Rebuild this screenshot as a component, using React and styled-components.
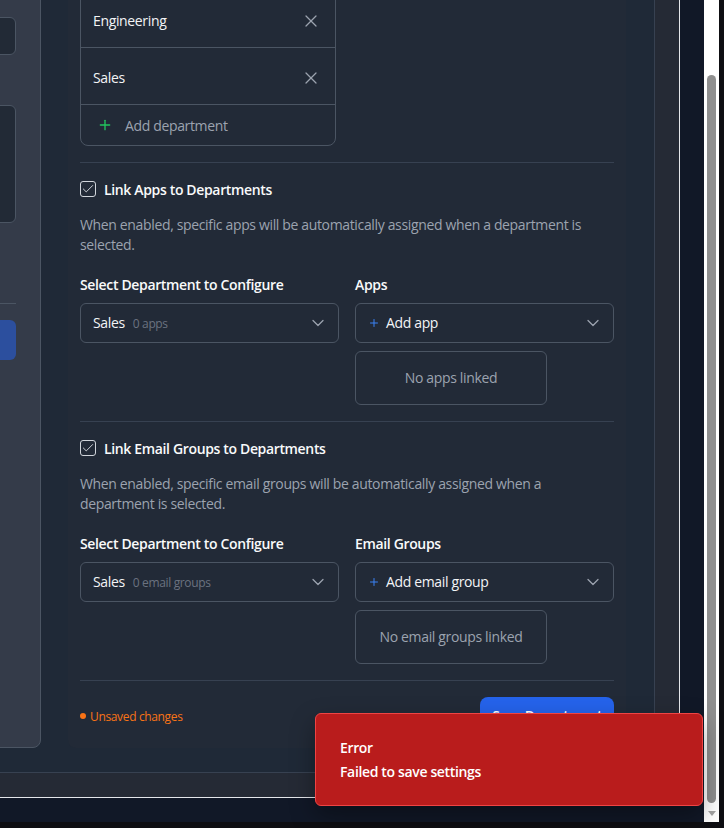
import React, { useLayoutEffect, useRef } from "react";
import styled, { createGlobalStyle } from "styled-components";
import { ChevronDown, Plus, X, Check } from "lucide-react";

const GlobalStyle = createGlobalStyle`
  * { box-sizing: border-box; }
  html, body { margin: 0; padding: 0; background: #0e0e12; overflow: hidden; }
  body {
    font-family: "Open Sans", "Noto Sans", sans-serif;
    font-size: 14px;
    color: #f3f4f6;
    letter-spacing: -0.025em;
  }
`;

const Window = styled.div`
  position: relative;
  width: 724px;
  height: 828px;
  display: flex;
  align-items: flex-start;
  background: #0e0e12;
  overflow: hidden;
`;

const Viewport = styled.div`
  width: 704px;
  height: 822px;
  overflow: hidden;
  background: #111827;
  flex-shrink: 0;
`;

const ScrollContent = styled.div`
  width: max-content;
  padding: 24px 24px 40px 24px;
`;

const OuterBox = styled.div`
  background: #252a35;
  border: 1px solid #e5e7eb;
  padding: 24px;
`;

const Panel = styled.div`
  display: flex;
  align-items: stretch;
  gap: 27px;
  background: #1f2937;
  border: 1px solid #374151;
  padding: 24px 28px 24px 24px;
`;

const Sidebar = styled.aside`
  width: 260px;
  background: #343b49;
  border: 1px solid #4b5563;
  border-radius: 8px;
  padding: 66px 24px 24px;
  display: flex;
  flex-direction: column;
  gap: 50px;
`;

const SideInput = styled.div`
  height: ${(p) => p.$h}px;
  background: #222a36;
  border: 1px solid #4b5563;
  border-radius: 6px;
`;

const SideActions = styled.div`
  margin-top: 30px;
  padding-top: 16px;
  border-top: 1px solid #4b5563;
`;

const SideButton = styled.div`
  height: 40px;
  border-radius: 6px;
  background: #2c4f9e;
`;

const Card = styled.section`
  width: 558px;
  background: #222a37;
  border-radius: 8px;
  padding: 40px 12px 13px;
  display: flex;
  flex-direction: column;
`;

const DeptList = styled.div`
  width: 256px;
  border: 1px solid #4b5563;
  border-radius: 8px;
  overflow: hidden;
`;

const DeptRow = styled.div`
  height: 57px;
  padding: 3px 14px 0 12px;
  display: flex;
  align-items: center;
  justify-content: space-between;
  border-bottom: 1px solid #4b5563;
  color: #f3f4f6;
  line-height: 20px;
`;

const IconButton = styled.span`
  display: flex;
  color: #9ca3af;
`;

const AddRow = styled.div`
  height: 40px;
  padding-left: 16px;
  display: flex;
  align-items: center;
  gap: 12px;
  color: #9ca3af;
`;

const Section = styled.div`
  margin-top: 16px;
  padding-top: 16px;
  border-top: 1px solid #374151;
`;

const CheckRow = styled.label`
  height: 20px;
  display: flex;
  align-items: center;
  gap: 8px;
  font-weight: 600;
  color: #f9fafb;
`;

const CheckBox = styled.span`
  width: 16px;
  height: 16px;
  border: 1px solid #d1d5db;
  border-radius: 3px;
  display: flex;
  align-items: center;
  justify-content: center;
  color: #e5e7eb;
`;

const Desc = styled.p`
  margin: 16px 0 0;
  line-height: 20px;
  color: #9ca3af;
`;

const Columns = styled.div`
  margin-top: 20px;
  display: grid;
  grid-template-columns: 1fr 1fr;
  gap: 16px;
`;

const Field = styled.div`
  display: flex;
  flex-direction: column;
  align-items: flex-start;
`;

const FieldLabel = styled.div`
  line-height: 20px;
  font-weight: 600;
  color: #f9fafb;
  margin-bottom: 8px;
`;

const Select = styled.div`
  width: 100%;
  height: 40px;
  border: 1px solid #4b5563;
  border-radius: 6px;
  padding: 0 10px 0 12px;
  display: flex;
  align-items: center;
  justify-content: space-between;
  color: #9ca3af;
`;

const SelectValue = styled.span`
  display: flex;
  align-items: baseline;
  gap: ${(p) => (p.$add ? 6 : 8)}px;
  color: #f3f4f6;
  line-height: 20px;
`;

const PlusMark = styled.span`
  display: flex;
  align-self: center;
  color: #3b82f6;
`;

const Count = styled.span`
  font-size: 12px;
  color: #6b7280;
`;

const EmptyBox = styled.div`
  margin-top: 8px;
  width: 192px;
  padding: 16px 0;
  border: 1px solid #4b5563;
  border-radius: 6px;
  text-align: center;
  line-height: 20px;
  color: #9ca3af;
`;

const Footer = styled.div`
  margin-top: 16px;
  padding-top: 16px;
  border-top: 1px solid #374151;
  display: flex;
  align-items: center;
  justify-content: space-between;
`;

const Unsaved = styled.span`
  display: flex;
  align-items: center;
  gap: 4px;
  font-size: 12px;
  color: #f97316;
`;

const Dot = styled.span`
  width: 6px;
  height: 6px;
  border-radius: 50%;
  background: #f97316;
`;

const SaveButton = styled.button`
  height: 38px;
  padding: 0 12px;
  border: 0;
  border-radius: 8px;
  background: #2563eb;
  color: #ffffff;
  font-family: inherit;
  font-size: 13.8px;
  letter-spacing: -0.03em;
  font-weight: 600;
  line-height: 20px;
`;

const Scrollbar = styled.div`
  width: 15px;
  height: 822px;
  background: #ffffff;
  padding-top: 75px;
  display: flex;
  flex-direction: column;
  align-items: center;
  flex-shrink: 0;
`;

const Thumb = styled.div`
  width: 9px;
  height: 728px;
  border-radius: 5px;
  background: #8f8f8f;
`;

const ArrowDown = styled.div`
  margin-top: 8px;
  width: 0;
  height: 0;
  border-left: 4.5px solid transparent;
  border-right: 4.5px solid transparent;
  border-top: 5px solid #a3a3a3;
`;

const Toast = styled.div`
  position: absolute;
  right: 21px;
  bottom: 22px;
  width: 388px;
  height: 93px;
  padding: 24px;
  background: #b91c1c;
  border: 1px solid #ef4444;
  border-radius: 6px;
  display: flex;
  flex-direction: column;
  gap: 4px;
  box-shadow: 0 10px 25px rgba(0, 0, 0, 0.35);
`;

const ToastLine = styled.div`
  line-height: 20px;
  font-weight: 600;
  color: #ffffff;
`;

function LinkSection({ title, desc, rightLabel, count, addLabel, emptyText }) {
  return (
    <Section>
      <CheckRow>
        <CheckBox>
          <Check size={14} strokeWidth={1.5} />
        </CheckBox>
        {title}
      </CheckRow>
      <Desc>{desc}</Desc>
      <Columns>
        <Field>
          <FieldLabel>Select Department to Configure</FieldLabel>
          <Select>
            <SelectValue>
              Sales <Count>{count}</Count>
            </SelectValue>
            <ChevronDown size={20} strokeWidth={1.5} />
          </Select>
        </Field>
        <Field>
          <FieldLabel>{rightLabel}</FieldLabel>
          <Select>
            <SelectValue $add>
              <PlusMark>
                <Plus size={12} strokeWidth={2} />
              </PlusMark>
              {addLabel}
            </SelectValue>
            <ChevronDown size={20} strokeWidth={1.5} />
          </Select>
          <EmptyBox>{emptyText}</EmptyBox>
        </Field>
      </Columns>
    </Section>
  );
}

export default function App() {
  const viewRef = useRef(null);
  useLayoutEffect(() => {
    const el = viewRef.current;
    if (el) {
      el.scrollTop = 124;
      el.scrollLeft = 293;
    }
  }, []);

  return (
    <>
      <GlobalStyle />
      <Window>
        <Viewport ref={viewRef}>
          <ScrollContent>
            <OuterBox>
              <Panel>
                <Sidebar>
                  <SideInput $h={38} />
                  <SideInput $h={118} />
                  <SideActions>
                    <SideButton />
                  </SideActions>
                </Sidebar>
                <Card>
                  <DeptList>
                    {["Engineering", "Sales"].map((d) => (
                      <DeptRow key={d}>
                        {d}
                        <IconButton>
                          <X size={20} strokeWidth={1.5} />
                        </IconButton>
                      </DeptRow>
                    ))}
                    <AddRow>
                      <Plus size={16} strokeWidth={2} color="#22c55e" />
                      Add department
                    </AddRow>
                  </DeptList>
                  <LinkSection
                    title="Link Apps to Departments"
                    desc="When enabled, specific apps will be automatically assigned when a department is selected."
                    rightLabel="Apps"
                    count="0 apps"
                    addLabel="Add app"
                    emptyText="No apps linked"
                  />
                  <LinkSection
                    title="Link Email Groups to Departments"
                    desc="When enabled, specific email groups will be automatically assigned when a department is selected."
                    rightLabel="Email Groups"
                    count="0 email groups"
                    addLabel="Add email group"
                    emptyText="No email groups linked"
                  />
                  <Footer>
                    <Unsaved>
                      <Dot />
                      Unsaved changes
                    </Unsaved>
                    <SaveButton>Save Department</SaveButton>
                  </Footer>
                </Card>
              </Panel>
            </OuterBox>
          </ScrollContent>
        </Viewport>
        <Scrollbar>
          <Thumb />
          <ArrowDown />
        </Scrollbar>
        <Toast>
          <ToastLine>Error</ToastLine>
          <ToastLine>Failed to save settings</ToastLine>
        </Toast>
      </Window>
    </>
  );
}
